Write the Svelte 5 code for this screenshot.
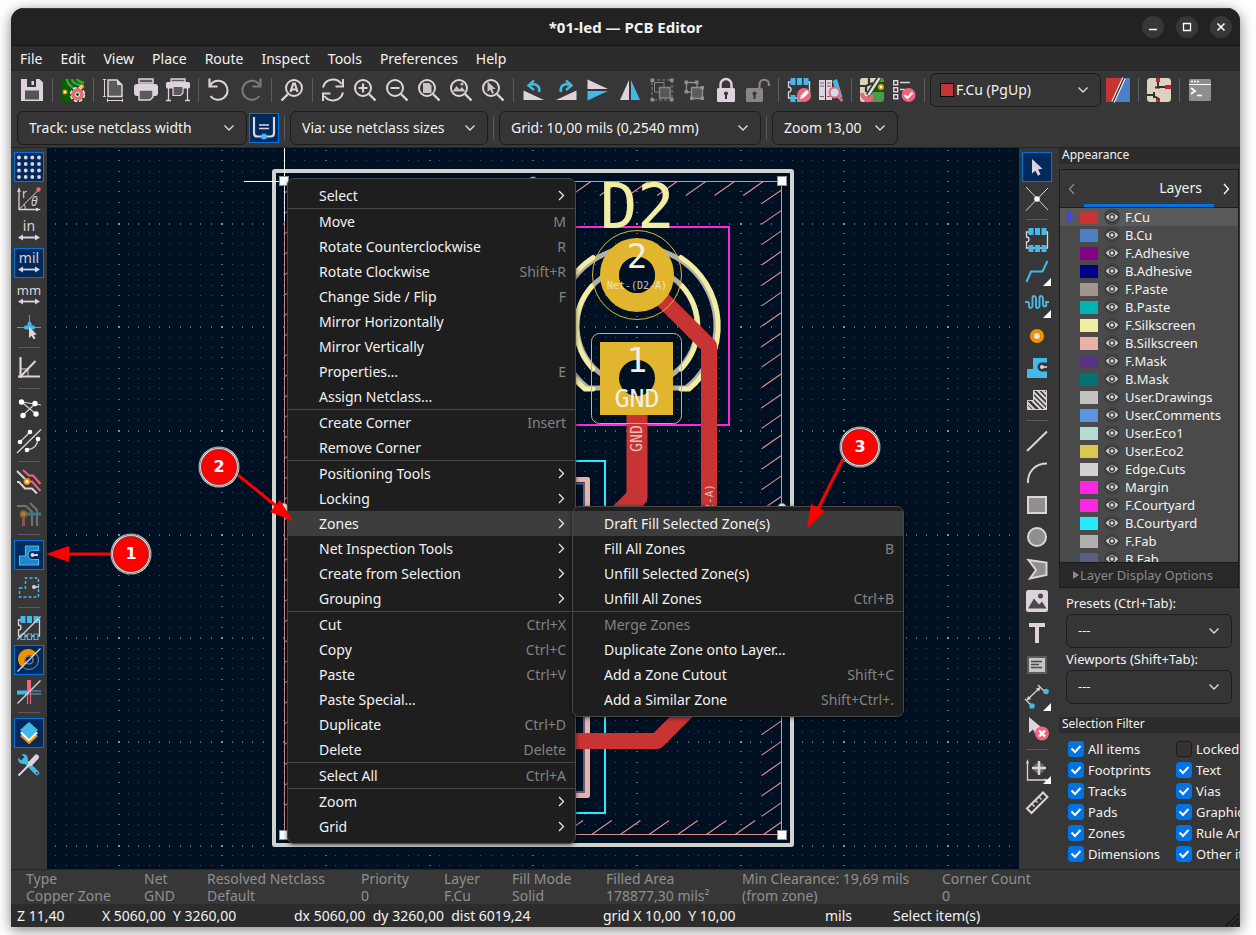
<script>
  const L = '#ded3dd';
  const B = '#42b8eb';
  const P = '#f2647e';
  const O = '#f29100';
  const G = '#8f8f8f';

  const lens = `<circle cx="10" cy="10" r="8" fill="none" stroke="${L}" stroke-width="2"/><path d="M16 16l6.500 6.500" stroke="${L}" stroke-width="2.400"/>`;
  const chip = `<path d="M4 4H1.500V9a2.500 2.500 0 0 1 0 5V20H22.500V4H20" fill="none" stroke="${L}" stroke-width="1.300"/>`;
  const slash = `<path d="M.5 23.500L23.500 .5" stroke="${L}" stroke-width="1.200"/>`;
  const dim = `<path d="M3 18.500H21" stroke="${L}" stroke-width="1.800"/><path d="M1 18.500l5-3v6zM23 18.500l-5-3v6z" fill="${L}"/>`;
  const word = (t, s) => `<text x="12" y="12" text-anchor="middle" font-family="Noto Sans, sans-serif" font-size="${s}" fill="${L}">${t}</text>`;

  const icons = {
    save: `<path d="M1 1H19.500L23 4.500V23H1z" fill="${L}"/><path d="M7 1H16V9H7z" fill="#373737"/><path d="M11.500 3H14V7H11.500z" fill="${L}"/><path d="M5 12.500H19V21.500H5z" fill="#545454"/>`,
    board: `<rect x="1" y="1" width="22" height="22" rx="2.500" fill="#006400"/><path d="M6 1C6 8 12 8 14 12M11 1c0 5 6 5 12 8M16 1c1 3 4 3 7 4" fill="none" stroke="#4a9a48" stroke-width="2.400"/><circle cx="4" cy="14" r="1.800" fill="#fff" stroke="${O}" stroke-width="1.400"/><circle cx="20.500" cy="8.500" r="1.700" fill="#fff" stroke="${O}" stroke-width="1.400"/><circle cx="16.500" cy="16.500" r="6" fill="${P}" stroke="#fff" stroke-width="3.200" stroke-dasharray="3.100 1.610"/><circle cx="16.500" cy="16.500" r="5.700" fill="${P}" stroke="${P}" stroke-width="1.500" stroke-dasharray="2.700 1.780"/><circle cx="16.500" cy="16.500" r="2" fill="#006400" stroke="#fff"/>`,
    page: `<path d="M6 2H15L20 7V18.500H6z" fill="#5b5b5b" stroke="${L}" stroke-width="1.500"/><path d="M15 1.500V7H20.500z" fill="${L}"/><path d="M2.500 1V19M1 1.500H4M1 18.500H4M5 22.500H21M5.500 20.500V24M20.500 20.500V24" stroke="${L}" fill="none"/>`,
    print: `<path d="M5 1H19V5H5z" fill="#5b5b5b" stroke="${L}" stroke-width="1.500"/><rect x="0" y="6" width="24" height="12" rx="3" fill="${L}"/><path d="M5 12H19V19L16 22H5z" fill="#5b5b5b" stroke="${L}" stroke-width="1.500"/>`,
    plot: `<path d="M5 1H19V4H5z" fill="#5b5b5b" stroke="${L}" stroke-width="1.300"/><rect x="0" y="4" width="24" height="6.500" rx="1.500" fill="${L}"/><path d="M7 8.500H17V15L14.500 17.500H7z" fill="#5b5b5b" stroke="${L}" stroke-width="1.200"/><path d="M2.500 10V22.500M21.500 10V22.500M0 22.500H5M19 22.500H24" stroke="${L}" stroke-width="1.300"/>`,
    undo: `<path d="M3.500 18A9.500 9.500 0 1 0 5 5L3 8" fill="none" stroke="${L}" stroke-width="2"/><path d="M2.500 .5V8.500H10.500" fill="none" stroke="${L}" stroke-width="2.200"/>`,
    redo: `<g opacity=".42"><path d="M20.500 18A9.500 9.500 0 1 1 19 5L21 8" fill="none" stroke="${L}" stroke-width="2"/><path d="M21.500 .5V8.500H13.500" fill="none" stroke="${L}" stroke-width="2.200"/></g>`,
    find: `<circle cx="14" cy="10" r="8" fill="none" stroke="${L}" stroke-width="2"/><path d="M8 16l-6.500 6.500" stroke="${L}" stroke-width="2.400"/><path d="M10.500 14L13.200 5.500H14.800L17.500 14M11.500 11.500H16.500" fill="none" stroke="${L}" stroke-width="2.200"/>`,
    refresh: `<path d="M2 9.500A10.300 10.300 0 0 1 20.500 6M22 14.500A10.300 10.300 0 0 1 3.500 18" fill="none" stroke="${L}" stroke-width="2"/><path d="M22 1V8.500H14.500M2 23V15.500H9.500" fill="none" stroke="${L}" stroke-width="2"/>`,
    zoomIn: `${lens}<path d="M5.500 10H14.500M10 5.500V14.500" stroke="${L}" stroke-width="2.200"/>`,
    zoomOut: `${lens}<path d="M5.500 10H14.500" stroke="${L}" stroke-width="2.200"/>`,
    zoomPage: `${lens}<path d="M6 5H12L14.500 7.500V15H6z" fill="#c5c5c5"/>`,
    zoomObj: `${lens}<path d="M3.500 13.500L7.500 8l3 3.500L13 9l3.500 4.500z" fill="#c5c5c5"/><circle cx="13" cy="6" r="1.600" fill="#c5c5c5"/>`,
    zoomSel: `${lens}<path d="M6.500 3.500V14l2.700-2.200 1.800 4 2-.9-1.700-3.800 3.500-.2z" fill="#c5c5c5"/>`,
    rotL: `<path d="M1.500 12.500V22H22z" fill="${L}"/><path d="M17 14C18.500 7.500 13 5 9 7" fill="none" stroke="${B}" stroke-width="2.600"/><path d="M12 2.500L6.500 7.500 12 12" fill="none" stroke="${B}" stroke-width="2.400"/>`,
    rotR: `<path d="M22.500 12.500V22H2z" fill="${L}"/><path d="M7 14C5.500 7.500 11 5 15 7" fill="none" stroke="${B}" stroke-width="2.600"/><path d="M12 2.500L17.500 7.500 12 12" fill="none" stroke="${B}" stroke-width="2.400"/>`,
    flipV: `<path d="M1.500 1.500V11H22z" fill="${L}"/><path d="M1.500 22.500V13H22z" fill="${B}"/>`,
    flipH: `<path d="M2 22H11V2z" fill="${L}"/><path d="M22 22H13V2z" fill="${B}"/>`,
    group: `<g stroke="${G}" fill="none" opacity=".9"><path d="M2 2H22V22H2z" stroke-dasharray="3 2"/><path d="M4.500 4.500H14V14H4.500z"/><path d="M9.500 9.500H20V20H9.500z" fill="#5b5b5b" stroke-width="1.500"/></g><path d="M.5 .5h3.500v3.500h-3.500zM20 .5h3.500v3.500h-3.500zM.5 20h3.500v3.500h-3.500zM20 20h3.500v3.500h-3.500z" fill="${G}"/>`,
    ungroup: `<g stroke="${G}" fill="none" stroke-width="1.300"><path d="M4.500 4.500H15V14H4.500z"/><path d="M9.500 9.500H20.500V20.500H9.500z" fill="#5b5b5b"/></g><path d="M2.500 2.500h3.500v3.500h-3.500zM13 2.500h3.500v3.500h-3.500zM2.500 12h3.500v3.500h-3.500zM18.500 8h3.500v3.500h-3.500zM18.500 18.500h3.500v3.500h-3.500zM8 18.500h3.500v3.500h-3.500z" fill="${G}"/>`,
    lock: `<path d="M6.500 11V6.500a5.500 5.500 0 0 1 11 0V11" fill="none" stroke="${L}" stroke-width="2.400"/><rect x="3" y="10" width="18" height="14" rx="1.500" fill="${L}"/><circle cx="12" cy="15.500" r="2" fill="#373737"/><path d="M11 16h2v5h-2z" fill="#373737"/>`,
    unlock: `<g opacity=".5"><path d="M13.500 11V6.500a4.700 4.700 0 0 1 9.500 0V8" fill="none" stroke="${L}" stroke-width="2.200"/><rect x="0" y="10" width="17" height="14" rx="1.500" fill="${L}"/></g><circle cx="8.500" cy="15.500" r="2" fill="#373737"/><path d="M7.500 16h2v5h-2z" fill="#373737"/>`,
    fpEdit: `${chip}<path d="M3.500 0h5v7h-5zM10 0h5v7h-5zM16.500 0h5v7h-5zM3.500 17h5v7h-5zM10 17h5v7h-5z" fill="${B}"/><circle cx="17" cy="17" r="7" fill="${P}"/><path d="M13 21l1-3.500 5.500-5.500 2.500 2.500L16.500 20z" fill="#fff"/>`,
    library: `<path d="M0 2H6V22H0zM7 2H13V22H7z" fill="${L}"/><path d="M1 5H5M1 8H5M1 18.500H5M8 5H12M8 8H12M8 18.500H12" stroke="#6b6b6b"/><path d="M13.500 3L18 1l5.500 18-4 2z" fill="${B}" /><circle cx="15.500" cy="14.500" r="5" fill="#cfdfe6" stroke="${P}" stroke-width="2"/><path d="M19 18.500l4.500 4.500" stroke="${P}" stroke-width="3"/>`,
    update: `<rect x="0" y="0" width="24" height="24" rx="3" fill="#4a9a48"/><path d="M3 0H19L4 24H3Q0 24 0 21V3Q0 0 3 0z" fill="#ddd2bd"/><path d="M17 4H24V14H11z" fill="#006400"/><path d="M9 0V7M0 8H6L13 5M6 8V14" stroke="#333" stroke-width="2.200" fill="none"/><path d="M19 0L8 17" stroke="#333" stroke-width="5"/><path d="M19.500 0L8.500 17" stroke="#ddd" stroke-width="2.400"/><circle cx="21" cy="9" r="2.200" fill="#fff" stroke="${O}" stroke-width="1.600"/><path d="M2 15c0 4 2 6 6 5M6 22c5 1 6-2 5-5" fill="none" stroke="${P}" stroke-width="4"/>`,
    drc: `<path d="M1.700 2.700h4v4h-4zM1.700 9.700h4v4h-4zM1.700 16.700h4v4h-4z" fill="none" stroke="${L}" stroke-width="1.400"/><path d="M8 4.500H18M8 11.500H13" stroke="${L}" stroke-width="1.400"/><circle cx="16.500" cy="17" r="7" fill="${P}"/><path d="M12.500 17l3 3 5-5.500" fill="none" stroke="#fff" stroke-width="2.200"/>`,
    pair: `<path d="M0 0H24V24H0z" fill="#4d7fc4"/><path d="M0 0H18L6 24H0z" fill="#c83434"/><path d="M18 0L7 24" stroke="#fff" stroke-width="3.500"/><path d="M18 0L7 24" stroke="#333" stroke-width="1.500"/>`,
    script: `<rect width="24" height="24" rx="3.500" fill="#ddd2bd"/><path d="M9 0h4v4h-4zM18 7h6v4h-6zM9 20h4v4h-4z" fill="#bf2045"/><path d="M11 4V9M8 9.500H13M18 9H11M0 17H7V14M7 17V20M7 18L12 21" fill="none" stroke="#333" stroke-width="2"/>`,
    term: `<rect x="1" y="1" width="22" height="22" rx="1.500" fill="#8f8f8f"/><path d="M1 6.500H23" stroke="#fff" stroke-width="1.200"/><path d="M3 3.500h2M6 3.500h2M9 3.500h2" stroke="#fff" stroke-width="1.500"/><path d="M3 10l4 3-4 3M9 17.500H14" fill="none" stroke="#fff" stroke-width="1.700"/>`,
    track: `<path d="M2 1V17Q2 20.500 5.500 20.500H18.500Q22 20.500 22 17V1" fill="none" stroke="${L}" stroke-width="2.200"/><path d="M7 9H17M7 12.500H17" stroke="${L}" stroke-width="1.300"/><circle cx="12" cy="20.500" r="3" fill="${B}"/>`,

    grid: [2.500, 9, 15.500, 22].map((y) => [2, 8.700, 15.300, 22].map((x) => `<circle cx="${x}" cy="${y}" r="1.900" fill="${L}"/>`).join('')).join(''),
    polar: `<path d="M2 23V3M2 22.500H21" stroke="${L}" stroke-width="1.300"/><path d="M2 0L.2 5H3.800zM24 22.500l-5-1.800v3.600z" fill="${L}"/><path d="M2 22.500L21 3.500" stroke="${L}"/><path d="M7 17.500q2 2 1 5" fill="none" stroke="${L}"/><circle cx="21.500" cy="2.500" r="2.200" fill="${P}"/><text x="5" y="11" font-family="Noto Sans, sans-serif" font-size="12" fill="${L}">r</text><text x="14" y="19" font-family="Noto Sans, sans-serif" font-style="italic" font-size="12" fill="${L}">θ</text>`,
    inch: word('in', 14) + dim,
    mil: word('mil', 14) + dim,
    mm: word('mm', 13) + dim,
    cursor: `<path d="M12.500 0V12M0 12.500H24" stroke="${G}"/><path d="M10.500 10.500V8L12.500 6l2 2v2.500H17l1.500 2-1.500 2H8l-1.500-2 1.500-2z" fill="${B}"/><path d="M12 11.500V23l2.700-2.200 1.800 3.500 2-1-1.800-3.300 3-.4z" fill="${L}"/>`,
    angle: `<path d="M3.500 1V22M1 20.500H23" stroke="${L}" stroke-width="2.200"/><path d="M3 21L18.500 5" stroke="${L}" stroke-width="2"/><path d="M4 13H11V20" fill="none" stroke="${L}"/>`,
    rats: `<path d="M4.500 5L18 7M18 7L6 18M4.500 5L19 17M18 7l6 1" stroke="${L}" stroke-width="1.100"/><g fill="#fff"><circle cx="4.500" cy="5" r="2.700"/><circle cx="18" cy="6.500" r="2.700"/><circle cx="6" cy="18.500" r="2.700"/><circle cx="19" cy="17" r="2.700"/></g>`,
    ratsCurved: `<path d="M3 13L13 3M10 21Q20 20 21 10M0 24L24 .5" stroke="${L}" fill="none" stroke-width="1.300"/><g fill="#fff"><circle cx="3" cy="13" r="2.300"/><circle cx="13" cy="3" r="2.300"/><circle cx="10" cy="21" r="2.300"/><circle cx="21" cy="10" r="2.300"/></g>`,
    bus: `<path d="M6 0L12 5.500H16L23.500 14M11 11.500H15L23.500 21" fill="none" stroke="${P}" stroke-width="2"/><path d="M0 1L8 9M0 12H2L8 18.500H15L20 23.500" fill="none" stroke="${L}" stroke-width="2"/><circle cx="10" cy="11.500" r="2.500" fill="#fff" stroke="${O}" stroke-width="1.800"/>`,
    busDim: `<g opacity=".5"><path d="M0 4H9L15 10V24M13 1L20 8V24" fill="none" stroke="#aaa" stroke-width="2.200"/><path d="M7 12H24" stroke="${B}" stroke-width="3"/><path d="M6.500 12V24" stroke="${P}" stroke-width="3"/><circle cx="6.500" cy="12" r="2.800" fill="#ddd" stroke="${O}" stroke-width="2"/></g>`,
    zoneFill: `<path d="M2.500 13H8.500V3H21.500V7.500H15.500A4.500 4.500 0 0 0 15.500 16.500H21.500V22H2.500z" fill="#1e86cc" stroke="${B}" stroke-width="1.200"/><circle cx="15.500" cy="12" r="2" fill="${L}"/><path d="M15.500 11H21V13H15.500z" fill="${L}"/>`,
    zoneOutline: `<path d="M2.500 13H8.500V3H21.500V22H2.500z" fill="none" stroke="${B}" stroke-width="1.400" stroke-dasharray="3 2"/><circle cx="17" cy="12" r="2" fill="${L}"/><path d="M17 11.300H22V12.700H17z" fill="${L}"/>`,
    fpSketch: `${chip}<path d="M3.500 0h5v7h-5zM10 0h5v7h-5zM16.500 0h5v7h-5z" fill="${B}"/><path d="M4 18h4v5.500h-4zM10.500 18h4v5.500h-4zM17 18h4v5.500h-4z" fill="#373737" stroke="${B}" stroke-width="1.200"/>${slash}`,
    padSketch: `<circle cx="12" cy="12" r="9.500" fill="none" stroke="${G}"/><circle cx="12" cy="12" r="4" fill="none" stroke="${G}" stroke-width="1.200"/><path d="M5 19A10 10 0 1 1 19 5L15.500 8.500A5 5 0 0 0 8.500 15.500z" fill="${O}"/>${slash}`,
    trackSketch: `<path d="M0 12.500H12" stroke="${B}" stroke-width="4"/><path d="M12 11H24M12 14H24" stroke="${B}" stroke-width="1.200"/><path d="M12 0V12" stroke="${P}" stroke-width="4"/><path d="M10.500 12V24M13.500 12V24" stroke="${P}" stroke-width="1.200"/>${slash}`,
    layers: `<path d="M3 15L12 23.500 21 15 12 8z" fill="${O}"/><path d="M3 12L12 20.500 21 12 12 5z" fill="#fff"/><path d="M3 9L12 18 21 9 12 1z" fill="${B}"/>`,
    tools: `<path d="M6 6L20 20" stroke="${B}" stroke-width="4.500" stroke-linecap="round"/><circle cx="6" cy="6" r="5" fill="${B}"/><path d="M0 3.500L3.500 0 7.500 4 4 7.500z" fill="#373737"/><circle cx="20" cy="20" r="1" fill="#373737"/><path d="M1.500 22.500L13 11" stroke="${L}" stroke-width="2"/><path d="M13.500 10.500L19.500 4" stroke="${L}" stroke-width="5" stroke-linecap="round"/>`,

    select: `<path d="M7 4V18.500l3.300-2.800 2.700 5 2.600-1.400-2.600-4.800 4.500-.7z" fill="${L}"/>`,
    highlight: `<path d="M1 0L23 23M23 1L1 23.500" stroke="${L}"/><circle cx="12" cy="12" r="2.800" fill="#fff"/>`,
    footprint: `${chip}<path d="M3.500 0h5v7h-5zM10 0h5v7h-5zM16.500 0h5v7h-5zM3.500 17h5v7h-5zM10 17h5v7h-5zM16.500 17h5v7h-5z" fill="${B}"/>`,
    route: `<path d="M1.500 22L6 11.500H17.500L22.500 1" fill="none" stroke="${B}" stroke-width="2"/>`,
    tune: `<path d="M0 10H2.500Q4 10 4 12V14Q4 16 5.500 16T7.500 14V6Q7.500 4 9 4T11 6V14Q11 16 12.500 16T14.500 14V6Q14.500 4 16 4T18 6V12Q18 14.500 20 14.500T21 10H24" fill="none" stroke="${B}" stroke-width="1.900"/>`,
    via: `<circle cx="12" cy="12" r="5" fill="#e6e6e6" stroke="${O}" stroke-width="4.200"/>`,
    zone: `<path d="M2 13H8V2H22V6.500H17A4.500 4.500 0 0 0 17 15.500H22V22H2z" fill="${B}"/><circle cx="17" cy="11" r="2" fill="${L}"/><path d="M17 10.200H22V11.800H17z" fill="${L}"/>`,
    keepout: `<defs><clipPath id="keep"><path d="M2 12H8V2H22V22H2z"/></clipPath></defs><path d="M2.500 12.500H8.500V2.500H21.500V21.500H2.500z" fill="none" stroke="${L}"/><path clip-path="url(#keep)" d="M-4 8L14 26M0 5.500L20 25.500M4 4.500L24 24.500M6 1.500L26 21.500M11 1L26 16M16 1L26 11M-2 14L12 28" stroke="${L}" stroke-width="2"/>`,
    line: `<path d="M2 22L22 2.500" stroke="${L}" stroke-width="2"/>`,
    arc: `<path d="M3 22C2.500 11 10 2.500 22 2.500" fill="none" stroke="${L}" stroke-width="2"/>`,
    rect: `<path d="M3 4H21V20H3z" fill="${G}" stroke="${L}" stroke-width="2"/>`,
    circle: `<circle cx="12" cy="12" r="9" fill="${G}" stroke="${L}" stroke-width="2"/>`,
    poly: `<path d="M3.500 3L21.500 5.500V18L5 21.500 11 13z" fill="${G}" stroke="${L}" stroke-width="2"/>`,
    image: `<rect x="1" y="1" width="22" height="22" rx="2.500" fill="${L}"/><path d="M3 19.500L9 9.500l5 6 3-3 4.500 7z" fill="#4a4a4a"/><circle cx="15.500" cy="7" r="2.500" fill="#4a4a4a"/>`,
    text: `<path d="M4 2H20V6H14V22H10V6H4z" fill="${L}"/>`,
    textbox: `<path d="M3 4H21V20H3z" fill="#c5c5c5" stroke="#5b5b5b" stroke-width="2"/><path d="M6 8.500H17M6 11.500H14M6 14.500H17" stroke="#4a4a4a" stroke-width="1.300"/>`,
    dimension: `<path d="M3 14L14 3.500M0 14L7 21M13 0L21 8" stroke="${L}" stroke-width="1.200"/><path d="M1.500 15.500l1.500-4.500 3 3zM15.500 2l-1.500 4.500-3-3z" fill="${L}"/><circle cx="21" cy="6.500" r="2.800" fill="${B}"/><circle cx="7" cy="21" r="2.800" fill="${B}"/>`,
    remove: `<path d="M4 0V16l4-3.500 3.500 6.500 3.500-2-3-5 5-1z" fill="${L}"/><circle cx="17" cy="16.500" r="7" fill="${P}"/><path d="M14 13.500l6 6M20 13.500l-6 6" stroke="#fff" stroke-width="2.400"/>`,
    origin: `<path d="M2.500 4V22H22" fill="none" stroke="${L}" stroke-width="1.300"/><path d="M2.500 1L1 5.500H4zM24 22l-4.500-1.500v3z" fill="${L}"/><circle cx="14" cy="10" r="5.500" fill="#6b6b6b"/><path d="M7 10H21M14 3V17" stroke="${L}" stroke-width="2.400"/>`,
    measure: `<path d="M2 18.500L18 2.500 22.500 7 6.500 23z" fill="none" stroke="${L}" stroke-width="2"/><path d="M7 14l2.500 2.500M10.500 10.500l2 2M14 7l2.500 2.500" stroke="${L}" stroke-width="1.400"/>`
  };

  const topTools = ['save', '|', 'board', '|', 'page', 'print', 'plot', '|', 'undo', 'redo', '|', 'find', '|', 'refresh', 'zoomIn', 'zoomOut', 'zoomPage', 'zoomObj', 'zoomSel', '|', 'rotL', 'rotR', 'flipV', 'flipH', 'group', 'ungroup', 'lock', 'unlock', '|', 'fpEdit', 'library', '|', 'update', 'drc', '|'];
  const endTools = ['pair', '|', 'script', '|', 'term'];
  const leftTools = ['grid', 'polar', 'inch', 'mil', 'mm', 'cursor', '|', 'angle', '|', 'rats', 'ratsCurved', '|', 'bus', 'busDim', '|', 'zoneFill', 'zoneOutline', '|', 'fpSketch', 'padSketch', 'trackSketch', '|', 'layers', 'tools'];
  const rightTools = ['select', 'highlight', '|', 'footprint', 'route', 'tune', 'via', 'zone', 'keepout', '|', 'line', 'arc', 'rect', 'circle', 'poly', 'image', 'text', 'textbox', 'dimension', 'remove', '|', 'origin', 'measure'];
  const active = new Set(['grid', 'mil', 'zoneFill', 'padSketch', 'layers', 'select', 'track']);
  const withMore = new Set(['route', 'tune', 'dimension', 'origin']);

  const menus = ['File', 'Edit', 'View', 'Place', 'Route', 'Inspect', 'Tools', 'Preferences', 'Help'];

  const mainMenu = [
    ['Select', '>'], null,
    ['Move', 'M'], ['Rotate Counterclockwise', 'R'], ['Rotate Clockwise', 'Shift+R'], ['Change Side / Flip', 'F'],
    ['Mirror Horizontally', ''], ['Mirror Vertically', ''], ['Properties…', 'E'], ['Assign Netclass...', ''], null,
    ['Create Corner', 'Insert'], ['Remove Corner', ''], null,
    ['Positioning Tools', '>'], ['Locking', '>'], ['Zones', '>', 'on'], ['Net Inspection Tools', '>'], ['Create from Selection', '>'], ['Grouping', '>'], null,
    ['Cut', 'Ctrl+X'], ['Copy', 'Ctrl+C'], ['Paste', 'Ctrl+V'], ['Paste Special...', ''], ['Duplicate', 'Ctrl+D'], ['Delete', 'Delete'], null,
    ['Select All', 'Ctrl+A'], null,
    ['Zoom', '>'], ['Grid', '>']
  ];
  const zoneMenu = [
    ['Draft Fill Selected Zone(s)', '', 'on'], ['Fill All Zones', 'B'], ['Unfill Selected Zone(s)', ''], ['Unfill All Zones', 'Ctrl+B'], null,
    ['Merge Zones', '', 'off'], ['Duplicate Zone onto Layer…', ''], ['Add a Zone Cutout', 'Shift+C'], ['Add a Similar Zone', 'Shift+Ctrl+.']
  ];

  const layers = [
    ['F.Cu', '#c83434'], ['B.Cu', '#4d7fc4'], ['F.Adhesive', '#840084'], ['B.Adhesive', '#000084'], ['F.Paste', '#a39490'],
    ['B.Paste', '#00b2b2'], ['F.Silkscreen', '#f2eda1'], ['B.Silkscreen', '#e8b2a7'], ['F.Mask', '#573480'], ['B.Mask', '#027272'],
    ['User.Drawings', '#c2c2c2'], ['User.Comments', '#5994dc'], ['User.Eco1', '#b4dbd2'], ['User.Eco2', '#d8c852'], ['Edge.Cuts', '#d0d2cd'],
    ['Margin', '#ff26e2'], ['F.Courtyard', '#ff26e2'], ['B.Courtyard', '#26e9ff'], ['F.Fab', '#afafaf'], ['B.Fab', '#585d84']
  ];

  const filters = [
    ['All items', true], ['Locked items', false], ['Footprints', true], ['Text', true], ['Tracks', true], ['Vias', true],
    ['Pads', true], ['Graphics', true], ['Zones', true], ['Rule Areas', true], ['Dimensions', true], ['Other items', true]
  ];

  const info = [
    ['Type', 'Copper Zone'], ['Net', 'GND'], ['Resolved Netclass', 'Default'], ['Priority', '0'], ['Layer', 'F.Cu'],
    ['Fill Mode', 'Solid'], ['Filled Area', '178877,30 mils²'], ['Min Clearance: 19,69 mils', '(from zone)'], ['Corner Count', '0']
  ];
  const status = ['Z 11,40', 'X 5060,00  Y 3260,00', 'dx 5060,00  dy 3260,00  dist 6019,24', 'grid X 10,00  Y 10,00', 'mils', 'Select item(s)'];

  const step = 10.37;
  let minor = '';
  let major = '';
  let cross = '';
  for (let i = -7; i < 240; i++) {
    for (let j = -8; j < 150; j++) {
      const x = Math.round(117.500 + i * step);
      const y = Math.round(222.500 + j * step);
      const cx = i % 10 === 0;
      const cy = j % 10 === 0;
      if (cx && cy) cross += `M${x} ${y}h2v2h-2z`;
      else if (cx) major += `M${x} ${y}h2v1h-2z`;
      else if (cy) major += `M${x} ${y}h1v2h-1z`;
      else minor += `M${x} ${y}h1v1h-1z`;
    }
  }

  let hatch = '';
  for (let k = 0; k < 31; k++) {
    const y = 190 + k * 20.420;
    hatch += `M761.500 ${y + 13.800}L781.500 ${y}`;
    hatch += `M284.500 ${y + 3}l4-2.800`;
  }
  for (let k = 0; k < 7; k++) {
    hatch += `M${571 + k * 28.700} 195.500l20-14`;
    hatch += `M${563 + k * 28.700} 834.500l20-14`;
  }
  hatch += 'M763.500 834.500l18-12.500';
</script>

{#snippet tool(name)}
  {#if name === '|'}
    <span class="sep"></span>
  {:else}
    <button type="button" class="tool" class:active={active.has(name)} aria-label={name}>
      <svg width="24" height="24" viewBox="0 0 24 24">{@html icons[name]}</svg>
      {#if withMore.has(name)}<i class="more"></i>{/if}
    </button>
  {/if}
{/snippet}

{#snippet combo(text, cls, id)}
  <span class="combo {cls}">
    {#if cls === 'layer'}<i class="chip"></i>{/if}
    <select {id} aria-label={text}><option>{text}</option></select>
    <svg class="caret" width="12" height="8" viewBox="0 0 12 8"><path d="M1.500 1.500L6 6l4.500-4.500" fill="none" stroke="#e0e0e0" stroke-width="1.300" /></svg>
  </span>
{/snippet}

{#snippet popup(items, cls)}
  <div class="popup {cls}" role="menu">
    {#each items as item}
      {#if item}
        <button type="button" role="menuitem" class="item" class:on={item[2] === 'on'} disabled={item[2] === 'off'}>
          <span>{item[0]}</span>
          {#if item[1] === '>'}
            <svg width="9" height="12" viewBox="0 0 9 12"><path d="M2 1L6.500 5.500 2 10" fill="none" stroke="#e8e8e8" stroke-width="1.300" /></svg>
          {:else}
            <kbd>{item[1]}</kbd>
          {/if}
        </button>
      {:else}
        <hr />
      {/if}
    {/each}
  </div>
{/snippet}

{#snippet badge(n, x, y)}
  <circle cx={x} cy={y} r="20.500" fill="#fff" stroke="#333" stroke-width=".5" />
  <circle cx={x} cy={y} r="19.300" fill="none" stroke="#222" stroke-width=".6" />
  <circle cx={x} cy={y} r="17.800" fill="#ff0000" stroke="#222" stroke-width=".5" />
  <text {x} y={y + 5} class="num" text-anchor="middle">{n}</text>
{/snippet}

<div class="window">
  <header class="title">
    <h1>*01-led — PCB Editor</h1>
    <div class="wm">
      <button type="button" aria-label="Minimize"><svg width="10" height="10"><path d="M1 7.500H9" stroke="#fff" stroke-width="1.300" /></svg></button>
      <button type="button" aria-label="Maximize"><svg width="10" height="10"><path d="M1.500 1.500H8.500V8.500H1.500z" fill="none" stroke="#fff" stroke-width="1.300" /></svg></button>
      <button type="button" aria-label="Close"><svg width="10" height="10"><path d="M1.500 1.500l7 7M8.500 1.500l-7 7" stroke="#fff" stroke-width="1.500" /></svg></button>
    </div>
  </header>

  <nav class="menubar">
    {#each menus as m}<button type="button">{m}</button>{/each}
  </nav>

  <div class="bars">
    <div class="bar">
      {#each topTools as t}{@render tool(t)}{/each}
      {@render combo('F.Cu (PgUp)', 'layer', 'active-layer')}
      {#each endTools as t}{@render tool(t)}{/each}
    </div>
    <div class="bar">
      {@render combo('Track: use netclass width', 'w-track', 'track')}
      {@render tool('track')}
      {@render tool('|')}
      {@render combo('Via: use netclass sizes', 'w-via', 'via')}
      {@render tool('|')}
      {@render combo('Grid: 10,00 mils (0,2540 mm)', 'w-grid', 'grid')}
      {@render tool('|')}
      {@render combo('Zoom 13,00', 'w-zoom', 'zoom')}
    </div>
  </div>

  <main>
    <div class="side">{#each leftTools as t}{@render tool(t)}{/each}</div>

    <section class="canvas">
      <svg class="board">
        <g transform="translate(-47 -148)">
          <g shape-rendering="crispEdges">
            <path d={minor} fill="#414e58" />
            <path d={major} fill="#5f6a70" />
            <path d={cross} fill="#8b9291" />
          </g>
          <rect x="274" y="171" width="518" height="674" rx="1" fill="none" stroke="#d0d2cd" stroke-width="4" />
          <path d={hatch} fill="none" stroke="#e08f8f" stroke-width="1.100" />
          <rect x="284.500" y="181.500" width="497" height="653" fill="none" stroke="#e08f8f" />

          <path d="M560 227H729V425H560" fill="none" stroke="#ff26e2" stroke-width="2" />
          <path d="M560 461H605V813H560" fill="none" stroke="#26e9ff" stroke-width="2" />
          <path d="M560 483.500H584V792H560" fill="none" stroke="#585d84" stroke-width="2" />
          <path d="M560 479.500H587.500V795.500H560" fill="none" stroke="#e8b2a7" stroke-width="5" stroke-linejoin="round" />

          <g fill="none">
            <path d="M588 388A79 79 0 1 1 686 388zM637 266a60 60 0 1 0 .1 0z" stroke="#afafaf" stroke-width="5" />
            <g stroke="#f2eda1" stroke-width="5" stroke-linecap="round">
              <path d="M681 257.500A82 82 0 0 1 689 389H681M593 257.500A82 82 0 0 0 585 389H593" />
              <path d="M682 286A61 61 0 0 1 681 369M592 286A61 61 0 0 0 593 369" />
            </g>
            <g stroke="#c83434">
              <path d="M637 274L709 346V689L657 741H560" stroke-width="16" stroke-linejoin="round" />
              <path d="M637 378V497L600 534" stroke-width="21" stroke-linejoin="round" />
            </g>
            <circle cx="637" cy="275" r="27.500" stroke="#e2b52e" stroke-width="19" />
            <circle cx="637" cy="275" r="44.500" stroke="#e2b52e" />
            <rect x="591.500" y="333.500" width="90" height="90" rx="8" stroke="#e2b52e" />
          </g>
          <circle cx="637" cy="275" r="18" fill="#001023" />
          <rect x="600" y="342" width="73" height="73" fill="#e2b52e" />
          <circle cx="637" cy="378" r="18" fill="#001023" />

          <g class="mono">
            <text class="ref" x="600" y="228" font-size="62">D2</text>
            <text x="637" y="268" font-size="34" text-anchor="middle">2</text>
            <text x="637" y="289" font-size="10" text-anchor="middle" opacity=".8">Net-(D2-A)</text>
            <text x="637" y="372" font-size="34" text-anchor="middle">1</text>
            <text x="637" y="407" font-size="25" text-anchor="middle">GND</text>
            <text transform="translate(642 452) rotate(-90)" font-size="15" opacity=".75">GND</text>
            <text transform="translate(713 484) rotate(-90)" font-size="11" text-anchor="end" opacity=".75">Net-(D2-A)</text>
          </g>

          <path d="M284.500 148V221M244 181.500H290" stroke="#fff" />
          <g fill="#fff" stroke="#8f959b">
            <rect x="279.500" y="176.500" width="9" height="9" />
            <rect x="777.500" y="176.500" width="9" height="9" />
            <rect x="279.500" y="830.500" width="9" height="9" />
            <rect x="777.500" y="830.500" width="9" height="9" />
            <circle cx="533" cy="181.500" r="4.500" />
            <circle cx="284" cy="508" r="4.500" />
            <circle cx="782" cy="508" r="4.500" />
          </g>
        </g>
      </svg>

      {@render popup(mainMenu, 'first')}
      {@render popup(zoneMenu, 'sub')}

      <svg class="notes">
        <g transform="translate(-47 -148)">
          <g stroke="#ff0000" stroke-width="3">
            <path d="M112 554H66M238 475L281 510M843 459L818 509" />
          </g>
          <path d="M46 554L69 546V562zM293 521L270 512L280 500zM807 529L811 504L825 511z" fill="#ff0000" />
          {@render badge(1, 131, 554)}
          {@render badge(2, 219, 467)}
          {@render badge(3, 860, 447)}
        </g>
      </svg>
    </section>

    <div class="side right">{#each rightTools as t}{@render tool(t)}{/each}</div>

    <aside>
      <h2>Appearance</h2>
      <div class="book">
        <div class="tabs">
          <button type="button" aria-label="Previous tab"><svg width="8" height="12" viewBox="0 0 8 12"><path d="M6 1L1.500 6 6 11" fill="none" stroke="#8a8a8a" stroke-width="1.300" /></svg></button>
          <button type="button" class="tab">Layers</button>
          <button type="button" aria-label="Next tab"><svg width="8" height="12" viewBox="0 0 8 12"><path d="M2 1l4.500 5L2 11" fill="none" stroke="#fff" stroke-width="1.300" /></svg></button>
        </div>
        <ul>
          {#each layers as [name, color], i}
            <li class:current={i === 0}>
              <i class="mark"></i>
              <i class="swatch" style="background: {color}"></i>
              <button type="button" class="eye" aria-label="Toggle {name}">
                <svg width="16" height="16" viewBox="0 0 16 16"><circle cx="8" cy="8" r="8" fill="#414141" /><path d="M2 8Q8 .5 14 8Q8 15.500 2 8z" fill="#ded3dd" /><circle cx="8" cy="8" r="2.400" fill="#ded3dd" stroke="#414141" stroke-width="1.500" /></svg>
              </button>
              <span>{name}</span>
            </li>
          {/each}
        </ul>
        <button type="button" class="disclose"><i></i>Layer Display Options</button>
      </div>
      <div class="field">
        <label for="presets">Presets (Ctrl+Tab):</label>
        {@render combo('---', 'wide', 'presets')}
        <label for="viewports">Viewports (Shift+Tab):</label>
        {@render combo('---', 'wide', 'viewports')}
      </div>
      <h2>Selection Filter</h2>
      <div class="checks">
        {#each filters as [name, on]}
          <label><input type="checkbox" checked={on} /><span>{name}</span></label>
        {/each}
      </div>
    </aside>
  </main>

  <dl class="info">
    {#each info as [k, v]}<div><dt>{k}</dt><dd>{v}</dd></div>{/each}
  </dl>
  <footer>
    {#each status as s}<span>{s}</span>{/each}
    <svg class="grip" width="16" height="16"><path d="M2 15L15 2M7 15L15 7M12 15L15 12" stroke="#161616" stroke-width="1.300" /></svg>
  </footer>
</div>

<style>
  :global(body) {
    background: #fff;
    font-family: 'Noto Sans', 'Open Sans', sans-serif;
    font-size: 14px;
    color: #f2f2f2;
    overflow: hidden;
  }
  * {
    box-sizing: border-box;
  }
  button {
    font: inherit;
    color: inherit;
    background: none;
    border: 0;
    padding: 0;
    margin: 0;
  }
  svg {
    display: block;
  }
  .window {
    margin: 8px 16px 8px 11px;
    height: calc(100vh - 16px);
    display: flex;
    flex-direction: column;
    background: #373737;
    border-radius: 13px 13px 0 0;
    box-shadow: 0 3px 14px rgba(0, 0, 0, 0.5);
    overflow: hidden;
  }
  .title {
    flex: none;
    display: grid;
    grid-template-columns: 1fr auto 1fr;
    align-items: center;
    height: 38px;
    background: #222;
    border-top: 1px solid #3a3a3a;
    border-bottom: 1px solid #181818;
  }
  h1 {
    grid-column: 2;
    margin: 0;
    font-size: 15px;
    line-height: 20px;
  }
  .wm {
    display: flex;
    justify-content: flex-end;
    gap: 12px;
    padding-right: 8px;
  }
  .wm button {
    width: 22px;
    height: 22px;
    border-radius: 50%;
    background: #373737;
    display: grid;
    place-items: center;
  }
  .menubar {
    flex: none;
    display: flex;
    gap: 18px;
    padding: 0 9px;
    height: 25px;
    background: #2c2c2c;
    border-bottom: 1px solid #262626;
  }
  .bars {
    flex: none;
    padding: 0 5px;
    height: 77px;
    border-bottom: 1px solid #262626;
  }
  .bar {
    display: flex;
    align-items: center;
    height: 38px;
  }
  .tool {
    position: relative;
    flex: none;
    width: 30px;
    height: 30px;
    margin: 1px;
    display: grid;
    place-items: center;
    border: 1px solid transparent;
  }
  .tool svg {
    overflow: visible;
  }
  .tool.active {
    background: #002a5c;
    border-color: #0073e5;
  }
  .more {
    position: absolute;
    right: 0;
    bottom: 0;
    border: 4px solid #fff;
    border-top-color: transparent;
    border-left-color: transparent;
  }
  .sep {
    flex: none;
    width: 1px;
    height: 24px;
    margin: 0 4px;
    background: #5b5b5b;
  }
  .combo {
    flex: none;
    display: grid;
    align-items: center;
    height: 34px;
  }
  .combo > * {
    grid-area: 1 / 1;
  }
  .combo select {
    appearance: none;
    width: 100%;
    height: 34px;
    margin: 0;
    padding: 0 28px 2px 11px;
    font: inherit;
    color: inherit;
    background: #353535;
    border: 1px solid #1c1c1c;
    border-radius: 6px;
  }
  .caret {
    justify-self: end;
    margin-right: 12px;
    pointer-events: none;
  }
  .layer {
    width: 171px;
    margin: 0 1px;
  }
  .layer select {
    padding-left: 25px;
  }
  .chip {
    z-index: 1;
    width: 14px;
    height: 14px;
    margin-left: 10px;
    background: #c83434;
    border: 1px solid #000;
  }
  .w-track { width: 230px; margin: 0 1px; }
  .w-via { width: 198px; margin: 0 1px; }
  .w-grid { width: 262px; margin: 0 1px; }
  .w-zoom { width: 126px; margin: 0 1px; }
  main {
    flex: 1;
    min-height: 0;
    display: flex;
  }
  .side {
    flex: none;
    width: 36px;
    padding: 3px 2px;
    display: flex;
    flex-direction: column;
  }
  .side .sep {
    width: 22px;
    height: 1px;
    margin: 4px 5px;
  }
  .right {
    width: 40px;
    padding-right: 6px;
  }
  .canvas {
    position: relative;
    flex: 1;
    min-width: 0;
    overflow: hidden;
    background: #001023;
  }
  .board,
  .notes {
    position: absolute;
    inset: 0;
    width: 100%;
    height: 100%;
    pointer-events: none;
  }
  .mono {
    font-family: 'DejaVu Sans Mono', monospace;
    fill: #f3efe4;
  }
  .ref {
    fill: #f2eda1;
  }
  .num {
    font: bold 16px 'DejaVu Sans', sans-serif;
    fill: #fff;
  }
  .popup {
    position: absolute;
    padding: 4px 0;
    background: #1e1e1e;
    border: 1px solid #484848;
    border-radius: 7px;
    box-shadow: 0 1px 4px rgba(0, 0, 0, 0.6);
  }
  .first {
    left: 240px;
    top: 30px;
    width: 289px;
  }
  .sub {
    left: 525px;
    top: 358px;
    width: 332px;
  }
  .item {
    display: flex;
    justify-content: space-between;
    align-items: center;
    width: 100%;
    height: 25px;
    padding: 0 9px 0 31px;
    text-align: left;
  }
  .item.on {
    background: #3d3d3d;
  }
  .item:disabled {
    color: #838383;
  }
  kbd {
    font: inherit;
    color: #838383;
  }
  hr {
    height: 1px;
    margin: 0;
    border: 0;
    background: #484848;
  }
  aside {
    flex: none;
    width: 181px;
    padding-bottom: 5px;
    overflow: hidden;
    display: flex;
    flex-direction: column;
    font-size: 13px;
  }
  h2 {
    flex: none;
    margin: 0;
    padding: 0 0 2px 3px;
    font-size: 12px;
    font-weight: normal;
    line-height: 14px;
    background: #2c2c2c;
  }
  .book {
    flex: 1;
    min-height: 0;
    margin: 5px 1px 0 0;
    display: flex;
    flex-direction: column;
    border: 1px solid #1c1c1c;
  }
  .tabs {
    flex: none;
    display: grid;
    grid-template-columns: 24px 130px 24px;
    height: 38px;
    font-size: 14px;
    border-bottom: 1px solid #1c1c1c;
  }
  .tabs button {
    display: grid;
    place-items: center;
  }
  .tabs .tab {
    justify-content: end;
    padding-right: 12px;
    border-bottom: 3px solid #0073e5;
  }
  ul {
    flex: 1;
    min-height: 0;
    margin: 0;
    padding: 0;
    overflow: hidden;
    list-style: none;
    background: #4a4a4a;
  }
  li {
    display: flex;
    align-items: center;
    height: 18px;
    padding-left: 7px;
    line-height: 18px;
  }
  .current {
    background: #595959;
  }
  .mark {
    border: 7px solid transparent;
    border-right-width: 0;
    width: 7px;
  }
  .current .mark {
    border-left-color: #4040ff;
  }
  .swatch {
    width: 18px;
    height: 13px;
    margin: 0 6px;
  }
  .eye {
    width: 16px;
    height: 16px;
    margin-right: 5px;
  }
  .disclose {
    flex: none;
    display: flex;
    align-items: center;
    height: 25px;
    padding-left: 13px;
    color: #8a8a8a;
    background: #282828;
    border-top: 1px solid #1c1c1c;
  }
  .disclose i {
    border: 4px solid transparent;
    border-left: 6px solid #8a8a8a;
    border-right: 0;
    margin-right: 1px;
  }
  .field {
    flex: none;
    display: grid;
    padding: 4px 8px 13px 7px;
  }
  .field label {
    line-height: 22px;
  }
  .checks {
    flex: none;
    display: grid;
    grid-template-columns: 108px 108px;
    grid-auto-rows: 21px;
    padding: 5px 0 0 9px;
  }
  .checks label {
    display: flex;
    align-items: center;
    gap: 4px;
    white-space: nowrap;
  }
  input {
    appearance: none;
    flex: none;
    width: 16px;
    height: 16px;
    margin: 0;
    border: 1px solid #1c1c1c;
    border-radius: 3px;
    background: #323232;
  }
  input:checked {
    border-color: #0073e5;
    background: #0073e5 url("data:image/svg+xml,%3Csvg xmlns='http://www.w3.org/2000/svg' viewBox='0 0 14 14'%3E%3Cpath d='M2.500 6.500l3.500 3.500 5.500-6' fill='none' stroke='white' stroke-width='2'/%3E%3C/svg%3E");
  }
  .info {
    flex: none;
    display: grid;
    grid-template-columns: 118px 63px 154px 83px 68px 94px 136px 200px auto;
    margin: 0;
    height: 35px;
    padding: 0 0 0 15px;
    line-height: 17px;
    color: #8f8f8f;
    border-top: 1px solid #262626;
    white-space: nowrap;
  }
  dd {
    margin: 0;
  }
  footer {
    flex: none;
    display: grid;
    grid-template-columns: 85px 192px 309px 222px 68px 1fr auto;
    align-items: center;
    height: 23px;
    padding-left: 6px;
    white-space: pre;
    background: #2c2c2c;
  }
  .grip {
    align-self: end;
  }
</style>
